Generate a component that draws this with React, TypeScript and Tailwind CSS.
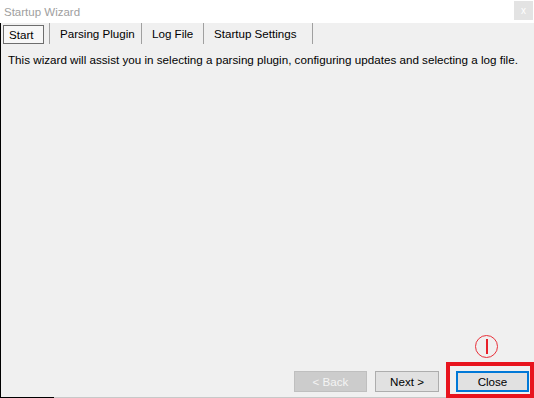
import React from "react";

const font = { fontFamily: '"Liberation Sans", "Noto Sans CJK JP", sans-serif' };

function Tab({ label, width }: { label: string; width: string }) {
     return (
          <div className={`flex h-[21px] items-center border-r border-[#a0a0a0] pl-[10px] text-[11.6px] text-black ${width}`}>
               {label}
          </div>
     );
}

export default function App() {
     return (
          <div className="relative flex h-[398px] w-[534px] flex-col overflow-hidden bg-white" style={font}>
               <div className="flex h-[23px] items-start justify-between bg-white">
                    <span className="pl-[4px] pt-[5px] text-[11.5px] leading-[14px] text-[#a0a0a0]">Startup Wizard</span>
                    <div className="mr-[1px] mt-[1px] flex h-[19px] w-[19px] items-center justify-center bg-[#e3e3e3] text-[10px] text-white">x</div>
               </div>
               <div className="flex flex-1 flex-col border-l border-black bg-[#f0f0f0]">
                    <div className="flex h-[22px] items-start">
                         <div className="flex h-[21px] w-[49px] items-start border-r border-[#a0a0a0]">
                              <div className="ml-[2px] mt-[2px] flex h-[19px] w-[41px] items-center border border-[#6d6d6d] bg-[#f7f7f7] pl-[5px] text-[11.6px] text-black">
                                   Start
                              </div>
                         </div>
                         <Tab label="Parsing Plugin" width="w-[92px]" />
                         <Tab label="Log File" width="w-[62px]" />
                         <Tab label="Startup Settings" width="w-[109px]" />
                    </div>
                    <p className="mt-[8px] pl-[7px] text-[11.65px] leading-[14px] text-black">
                         This wizard will assist you in selecting a parsing plugin, configuring updates and selecting a log file.
                    </p>
                    <div className="flex-1" />
                    <div className="mb-[5px] flex justify-end gap-[8px] pr-[5px]">
                         <button className="flex h-[21px] w-[73px] items-center justify-center border border-[#bfbfbf] bg-[#cccccc] text-[11.6px] text-[#f4f4f4]">
                              &lt; Back
                         </button>
                         <button className="flex h-[21px] w-[64px] items-center justify-center border border-[#adadad] bg-[#e1e1e1] text-[11.6px] text-black">
                              Next &gt;
                         </button>
                         <button className="ml-[9px] flex h-[21px] w-[73px] items-center justify-center border-2 border-[#0078d7] bg-[#e1e1e1] text-[11.6px] text-black">
                              Close
                         </button>
                    </div>
                    <div className="flex h-[1px]">
                         <div className="w-[53px] bg-black" />
                         <div className="flex-1 bg-[#c8c8c8]" />
                    </div>
               </div>
               <div className="absolute left-[475px] top-[335px] flex h-[23px] w-[23px] items-center justify-center rounded-full border-[1.5px] border-[#e8303a]">
                    <div className="h-[15px] w-[2px] bg-[#e8202a]" />
               </div>
               <div className="absolute left-[446px] top-[362px] h-[36px] w-[88px] border-[4px] border-[#e8141e]" />
          </div>
     );
}
